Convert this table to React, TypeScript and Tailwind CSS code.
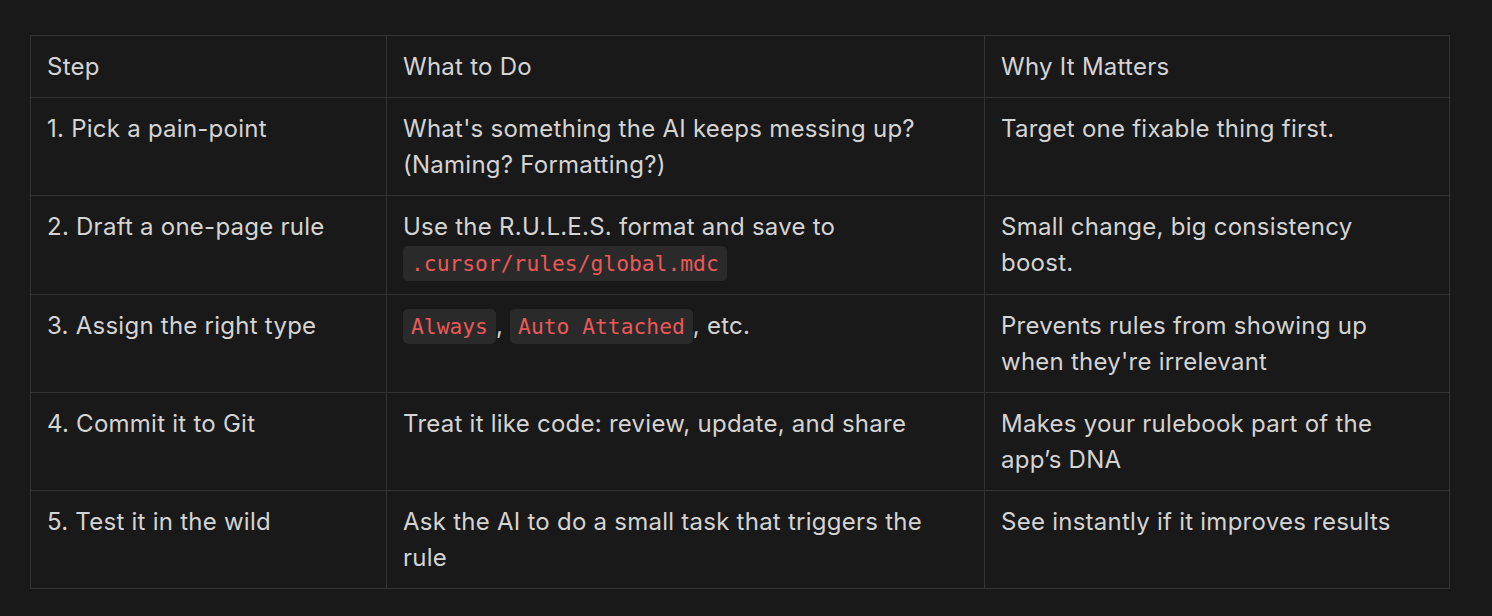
const rows: { step: string; what: React.ReactNode; why: string }[] = [
  {
    step: "1. Pick a pain-point",
    what: "What's something the AI keeps messing up? (Naming? Formatting?)",
    why: "Target one fixable thing first.",
  },
  {
    step: "2. Draft a one-page rule",
    what: (
      <>
        Use the R.U.L.E.S. format and save to <Code>.cursor/rules/global.mdc</Code>
      </>
    ),
    why: "Small change, big consistency boost.",
  },
  {
    step: "3. Assign the right type",
    what: (
      <>
        <Code>Always</Code>, <Code>Auto Attached</Code>, etc.
      </>
    ),
    why: "Prevents rules from showing up when they're irrelevant",
  },
  {
    step: "4. Commit it to Git",
    what: "Treat it like code: review, update, and share",
    why: "Makes your rulebook part of the app\u2019s DNA",
  },
  {
    step: "5. Test it in the wild",
    what: "Ask the AI to do a small task that triggers the rule",
    why: "See instantly if it improves results",
  },
];

function Code({ children }: { children: React.ReactNode }) {
  return (
    <code className="rounded-[5px] bg-[#2a2a2a] px-[8px] py-[5px] font-['DejaVu_Sans_Mono','Liberation_Mono',monospace] text-[21.3px] tracking-normal text-[#e9595a]">
      {children}
    </code>
  );
}

const cell = "border border-[#333333] pl-[16px] pt-[13px] pb-[12px] align-top";

export default function App() {
  return (
    <div className="min-h-[616px] bg-[#191919] px-[30px] pt-[35px] font-['Inter','Noto_Sans',sans-serif] text-[24px] leading-[36px] tracking-[0.25px] text-[#d4d4d4]">
      <table className="w-[1419px] table-fixed border-collapse">
        <colgroup>
          <col className="w-[356px]" />
          <col className="w-[598px]" />
          <col className="w-[465px]" />
        </colgroup>
        <thead>
          <tr>
            <th className={cell + " pr-[16px] text-left font-normal"}>Step</th>
            <th className={cell + " pr-[16px] text-left font-normal"}>What to Do</th>
            <th className={cell + " pr-[26px] text-left font-normal"}>Why It Matters</th>
          </tr>
        </thead>
        <tbody>
          {rows.map((r) => (
            <tr key={r.step}>
              <td className={cell + " pr-[16px]"}>{r.step}</td>
              <td className={cell + " pr-[16px]"}>{r.what}</td>
              <td className={cell + " pr-[26px]"}>{r.why}</td>
            </tr>
          ))}
        </tbody>
      </table>
    </div>
  );
}
